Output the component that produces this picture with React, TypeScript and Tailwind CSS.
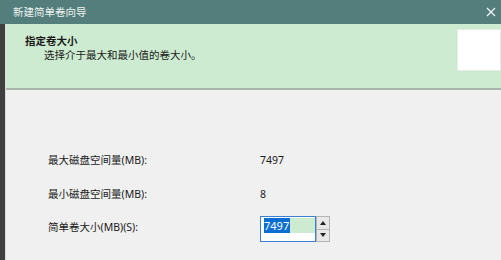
const font = { fontFamily: '"Noto Sans", "Noto Sans CJK SC", sans-serif' }

const Spinner = () => (
  <div className="flex flex-col w-[14px] h-[26px] border border-[#b5b5b5] bg-[#e8e8e8]">
    <div className="flex-1 flex items-center justify-center border-b border-[#b5b5b5]">
      <svg width="6" height="4" viewBox="0 0 6 4"><path d="M0 4 L3 0 L6 4 Z" fill="#222" /></svg>
    </div>
    <div className="flex-1 flex items-center justify-center">
      <svg width="6" height="4" viewBox="0 0 6 4"><path d="M0 0 L3 4 L6 0 Z" fill="#222" /></svg>
    </div>
  </div>
)

const App = () => {
  return (
    <div className="w-[501px] h-[260px] flex flex-col overflow-hidden text-[10.5px] text-[#1a1a1a]" style={font}>
      <div className="h-[24px] bg-[#537e7b] flex items-center justify-between pl-[13px] pr-[6px] text-[#eef4f3]">
        <span className="leading-none">新建简单卷向导</span>
        <svg width="10" height="10" viewBox="0 0 10 10" className="mr-[-1px]">
          <path d="M1 1 L9 9 M9 1 L1 9" stroke="#f2f6f5" strokeWidth="1.2" />
        </svg>
      </div>
      <div className="flex flex-1">
        <div className="w-[5px] bg-[#3f3f3f]" />
        <div className="w-[1px] bg-[#dcdcdc]" />
        <div className="flex-1 flex flex-col">
          <div className="h-[66px] bg-[#cdebd0] border-b-2 border-[#a9b6ab] flex justify-between">
            <div className="pl-[19px] pt-[10px] flex flex-col">
              <span className="font-bold leading-[14px]">指定卷大小</span>
              <span className="pl-[19px] leading-[14px]">选择介于最大和最小值的卷大小。</span>
            </div>
            <div className="mt-[5px] w-[44px] h-[42px] bg-white border border-[#e4ece5]" />
          </div>
          <div className="flex-1 bg-[#f0f0f0] pl-[42px] pt-[61px]">
            <div className="grid grid-cols-[212px_auto] auto-rows-[34px]">
              <span className="leading-[18px]">最大磁盘空间量(MB):</span>
              <span className="leading-[18px]">7497</span>
              <span className="leading-[18px]">最小磁盘空间量(MB):</span>
              <span className="leading-[18px]">8</span>
              <span className="leading-[18px] mt-[-1px]">简单卷大小(MB)(S):</span>
              <div className="flex mt-[-3px]">
                <div className="w-[56px] h-[26px] bg-white border border-[#3a7fd0] pl-[3px] pt-[1px]">
                  <div className="flex h-[15px]">
                    <span className="bg-[#0a6fd1] text-white text-[11px] leading-[15px] pr-[1px]">7497</span>
                    <div className="flex-1 bg-[#cdebd0]" />
                  </div>
                </div>
                <Spinner />
              </div>
            </div>
          </div>
        </div>
      </div>
    </div>
  )
}

export default App
